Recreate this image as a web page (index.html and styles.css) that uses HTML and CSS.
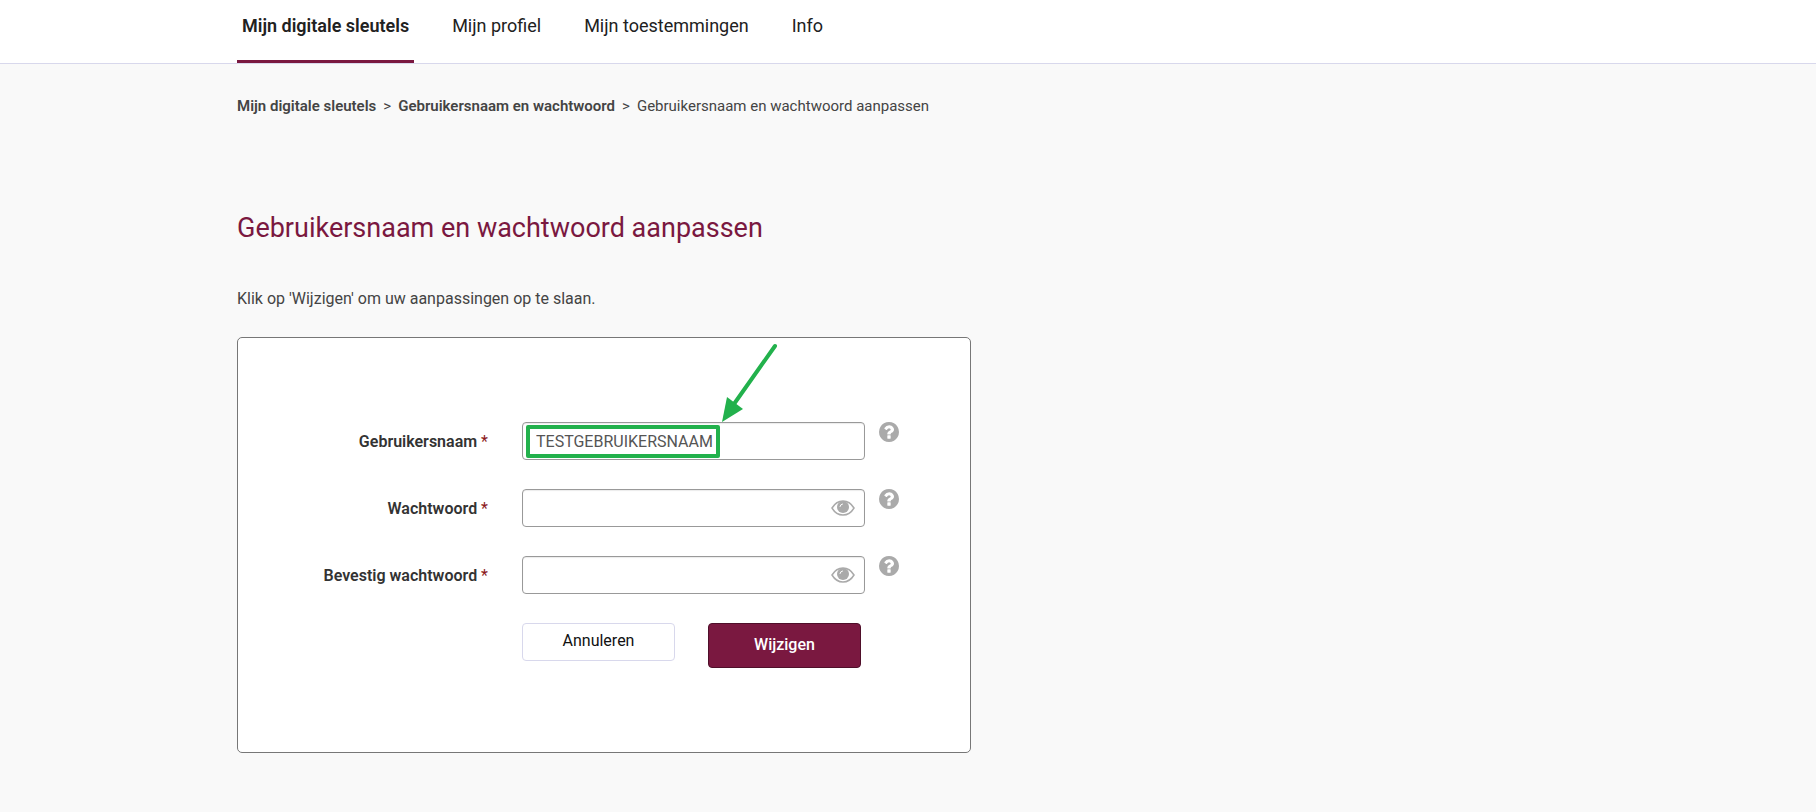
FILE: index.html
```html
<!DOCTYPE html>
<html lang="nl">
<head>
    <meta charset="UTF-8">
    <meta name="viewport" content="width=device-width, initial-scale=1.0">
    <title>Gebruikersnaam en wachtwoord aanpassen</title>
    <link rel="stylesheet" href="styles.css">
</head>
<body>

<svg class="sprite" aria-hidden="true">
    <symbol id="icon-help" viewBox="0 0 1536 1536">
        <path d="M896 1248v-192q0-14-9-23t-23-9H672q-14 0-23 9t-9 23v192q0 14 9 23t23 9h192q14 0 23-9t9-23zm256-672q0-88-55.500-163T958 297t-170-41q-243 0-371 213-15 24 8 42l132 100q7 6 19 6 16 0 25-12 53-68 86-92 34-24 86-24 48 0 85.500 26t37.500 59q0 38-20 61t-68 45q-63 28-115.500 86.500T640 892v36q0 14 9 23t23 9h192q14 0 23-9t9-23q0-19 21.500-49.500T972 829q32-18 49-28.500t46-35 44.500-48 28-60.500 12.500-81zm384 192q0 209-103 385.500T1153.500 1433 768 1536t-385.500-103T103 1153.500 0 768t103-385.500T382.500 103 768 0t385.500 103T1433 382.500 1536 768z"/>
    </symbol>
    <symbol id="icon-eye" viewBox="0 0 24 16">
        <path class="eye-outline" d="M1 8C4 3 8 1 12 1S20 3 23 8C20 13 16 15 12 15S4 13 1 8Z"/>
        <circle cx="12" cy="7" r="6"/>
        <path class="eye-shine" d="M9 6.500Q9.300 4.300 11.500 4"/>
    </symbol>
</svg>

<header class="main-header">
    <nav class="container main-nav">
        <a href="#" class="nav-link active">Mijn digitale sleutels</a>
        <a href="#" class="nav-link">Mijn profiel</a>
        <a href="#" class="nav-link">Mijn toestemmingen</a>
        <a href="#" class="nav-link">Info</a>
    </nav>
</header>

<main class="container">
    <nav class="breadcrumb">
        <a href="#">Mijn digitale sleutels</a>
        <span>&gt;</span>
        <a href="#">Gebruikersnaam en wachtwoord</a>
        <span>&gt;</span>
        <span>Gebruikersnaam en wachtwoord aanpassen</span>
    </nav>

    <h1>Gebruikersnaam en wachtwoord aanpassen</h1>
    <p class="intro">Klik op 'Wijzigen' om uw aanpassingen op te slaan.</p>

    <form class="card">
        <div class="form-row">
            <label for="username">Gebruikersnaam <span class="required">*</span></label>
            <div class="field">
                <input type="text" id="username" value="TESTGEBRUIKERSNAAM">
                <span class="highlight"></span>
                <svg class="arrow" viewBox="0 0 60 84" aria-hidden="true">
                    <path class="arrow-line" d="M55 8L14 66"/>
                    <path class="arrow-head" d="M2 84L7 59L23 71Z"/>
                </svg>
            </div>
            <button type="button" class="help" aria-label="Help"><svg><use href="#icon-help"/></svg></button>
        </div>

        <div class="form-row">
            <label for="password">Wachtwoord <span class="required">*</span></label>
            <div class="field">
                <input type="password" id="password">
                <button type="button" class="eye" aria-label="Toon wachtwoord"><svg><use href="#icon-eye"/></svg></button>
            </div>
            <button type="button" class="help" aria-label="Help"><svg><use href="#icon-help"/></svg></button>
        </div>

        <div class="form-row">
            <label for="confirm">Bevestig wachtwoord <span class="required">*</span></label>
            <div class="field">
                <input type="password" id="confirm">
                <button type="button" class="eye" aria-label="Toon wachtwoord"><svg><use href="#icon-eye"/></svg></button>
            </div>
            <button type="button" class="help" aria-label="Help"><svg><use href="#icon-help"/></svg></button>
        </div>

        <div class="form-row">
            <div class="buttons">
                <button type="button" class="btn btn-cancel">Annuleren</button>
                <button type="submit" class="btn btn-submit">Wijzigen</button>
            </div>
        </div>
    </form>
</main>

</body>
</html>
```
FILE: styles.css
```css
* {
    box-sizing: border-box;
}

body {
    margin: 0;
    font-family: Roboto, Arial, sans-serif;
    font-size: 16px;
    line-height: 20px;
    color: #444;
    background-color: #f9f9f9;
}

a {
    color: inherit;
    text-decoration: none;
}

.sprite {
    display: none;
}

.container {
    max-width: 1342px;
    margin: 0 auto;
}

/* Navigatie */
.main-header {
    background-color: white;
    border-bottom: 1px solid #d8d8ec;
}

.main-nav {
    display: flex;
    gap: 33px;
}

.nav-link {
    padding: 14px 5px 22px;
    border-bottom: 3px solid transparent;
    font-size: 18px;
    line-height: 24px;
    color: #212121;
}

.nav-link.active {
    font-weight: 600;
    border-bottom-color: #7a1840;
}

.breadcrumb {
    display: flex;
    gap: 7px;
    padding-top: 32px;
    font-size: 15px;
}

.breadcrumb a {
    font-weight: 600;
}

h1 {
    margin: 94px 0 43px;
    font-size: 27px;
    font-weight: normal;
    line-height: 36px;
    color: #7a1840;
}

.intro {
    margin: 0 0 28px;
}

/* Formulier */
.card {
    display: flex;
    flex-direction: column;
    gap: 29px;
    max-width: 734px;
    padding: 84px 71px 84px 48px;
    background-color: white;
    border: 1px solid #777;
    border-radius: 5px;
}

.form-row {
    display: grid;
    grid-template-columns: 202px 1fr 20px;
    align-items: start;
}

.form-row label {
    padding-top: 10px;
    text-align: right;
    font-weight: 600;
    color: #333;
}

.required {
    font-weight: normal;
    color: #8b1a1a;
}

.field {
    position: relative;
    margin: 0 14px 0 34px;
}

.field input {
    display: block;
    width: 100%;
    height: 38px;
    padding: 0 13px;
    border: 1px solid #999;
    border-radius: 4px;
    box-shadow: inset 0 1px 1px rgba(0, 0, 0, 0.08);
    font-family: inherit;
    font-size: 16px;
    color: #555;
    background-color: white;
}

.highlight {
    position: absolute;
    top: 3px;
    left: 4px;
    width: 194px;
    height: 33px;
    border: 4px solid #22b14c;
    border-radius: 2px;
    pointer-events: none;
}

.arrow {
    position: absolute;
    top: -84px;
    left: 198px;
    width: 60px;
    height: 84px;
    pointer-events: none;
}

.arrow-line {
    fill: none;
    stroke: #22b14c;
    stroke-width: 4;
    stroke-linecap: round;
}

.arrow-head {
    fill: #22b14c;
}

.eye,
.help {
    padding: 0;
    border: none;
    background: none;
    cursor: pointer;
}

.eye svg,
.help svg {
    display: block;
    width: 100%;
    height: 100%;
    fill: #aaa;
}

.eye {
    position: absolute;
    top: 11px;
    right: 10px;
    width: 24px;
    height: 16px;
}

.eye-outline {
    fill: none;
    stroke: #aaa;
    stroke-width: 1.500;
}

.eye-shine {
    fill: none;
    stroke: white;
    stroke-width: 1;
    stroke-linecap: round;
}

.help {
    width: 20px;
    height: 20px;
}

.buttons {
    grid-column: 2;
    display: flex;
    align-items: flex-start;
    gap: 33px;
    margin-left: 34px;
}

.btn {
    width: 153px;
    border-radius: 4px;
    font-family: inherit;
    font-size: 16px;
    line-height: 20px;
    cursor: pointer;
}

.btn-cancel {
    padding: 7px 12px 9px;
    color: #111;
    background-color: white;
    border: 1px solid #d8d8ec;
}

.btn-submit {
    padding: 11px 12px 12px;
    font-weight: 500;
    color: white;
    background-color: #7a1840;
    border: 1px solid #4f0f2a;
}
```
